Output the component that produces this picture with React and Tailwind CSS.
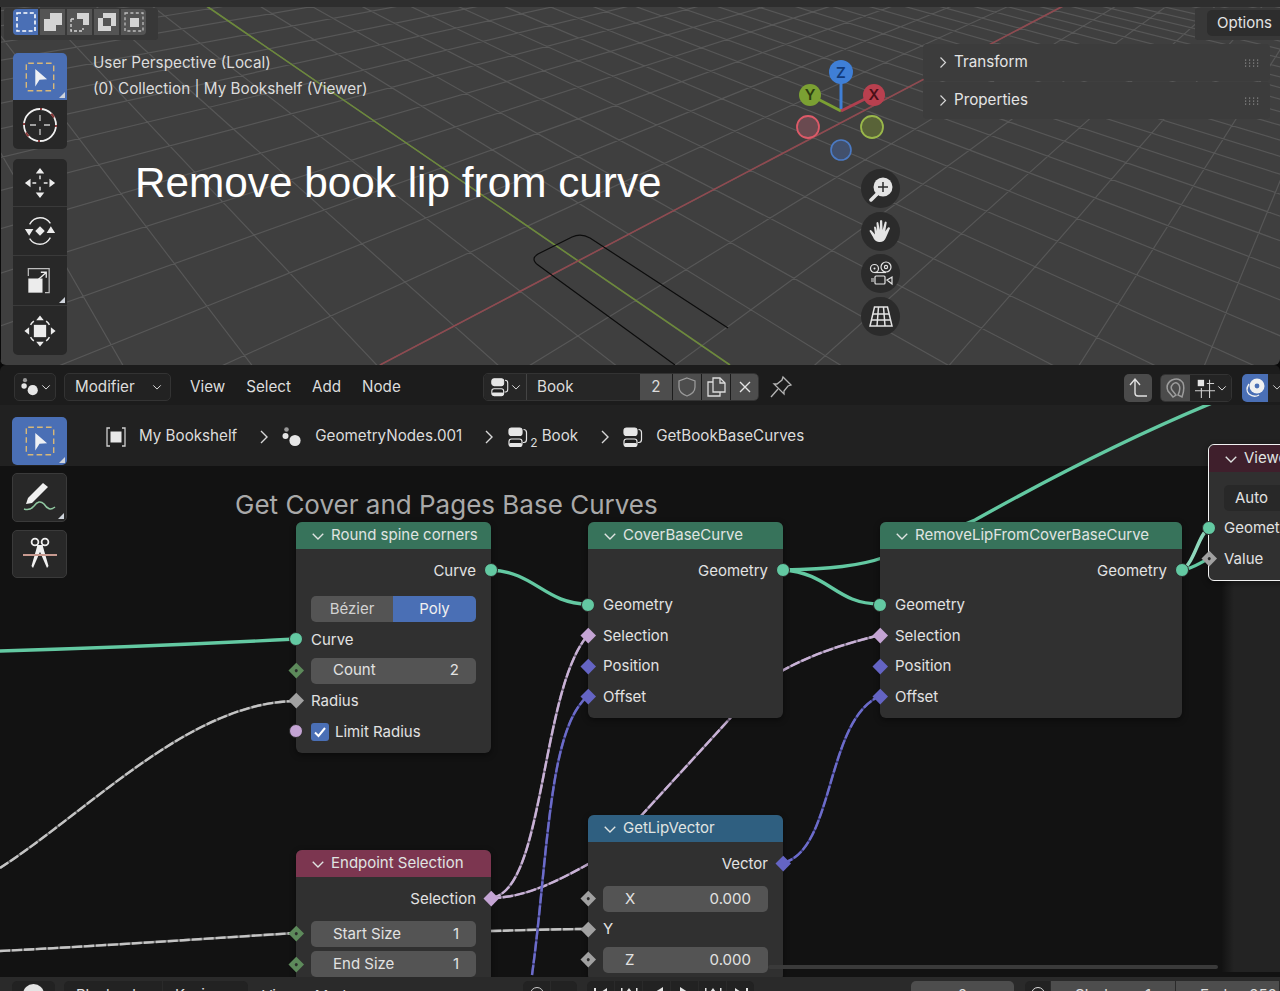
import React from "react";

const VA = [-274, -324];
const VB = [1431, -187];
const S = 108;
function gridLines() {
  const out = [];
  for (let k = -30; k <= 30; k++) {
    const px = 578 + k * S;
    const py = 261 + 0.08 * (px - 578);
    for (const V of [VA, VB]) {
      const t = (400 - V[1]) / (py - V[1]);
      out.push(`M${V[0]} ${V[1]}L${V[0] + t * (px - V[0])} 400`);
    }
  }
  return out.join("");
}

const Chev = ({ cls = "w-[11px] h-[11px]", d = "M1.5 4L6 8.5L10.5 4" }) => (
  <svg viewBox="0 0 12 12" className={cls} fill="none" stroke="currentColor" strokeWidth="1.2">
    <path d={d} />
  </svg>
);
const RightChev = ({ cls = "w-[12px] h-[16px]" }) => (
  <svg viewBox="0 0 12 16" className={cls} fill="none" stroke="#d8d8d8" strokeWidth="1.4">
    <path d="M3 2L9 8L3 14" />
  </svg>
);

const NodesIcon = ({ cls = "w-[22px] h-[22px]" }) => (
  <svg viewBox="0 0 22 22" className={cls} fill="#e6e6e6">
    <circle cx="5.5" cy="3.5" r="2.3" fill="#9a9a9a" />
    <circle cx="4.5" cy="10" r="3" />
    <circle cx="14" cy="14.5" r="5.6" />
  </svg>
);
const GroupIcon = ({ cls = "w-[22px] h-[22px]" }) => (
  <svg viewBox="0 0 22 22" className={cls} fill="none" stroke="#e6e6e6" strokeWidth="1.2">
    <rect x="2" y="2" width="13" height="7.5" rx="2.5" fill="#e6e6e6" />
    <rect x="2" y="13" width="13" height="7.5" rx="2.5" fill="#1f1f1f" />
    <rect x="2" y="17" width="13" height="3.5" rx="1.5" fill="#e6e6e6" stroke="none" />
    <path d="M16.5 3.5q3 0 3 3v7q0 3-2.5 3h-1" />
  </svg>
);

const SelectIcon = () => (
  <svg viewBox="0 0 36 36" className="w-[34px] h-[34px]">
    <rect x="3.5" y="3.5" width="29" height="29" rx="2" fill="none" stroke="#d8b878" strokeWidth="1.5" strokeDasharray="6 3.4" />
    <path d="M13 9.5L25.5 20.5L17.5 21L13 28Z" fill="#eef0f4" />
  </svg>
);
const Corner = () => (
  <svg viewBox="0 0 6 6" className="absolute right-[2px] bottom-[2px] w-[6px] h-[6px]">
    <path d="M6 0V6H0Z" fill="#cfd4dc" />
  </svg>
);
const CursorIcon = () => (
  <svg viewBox="0 0 36 36" className="w-[36px] h-[36px]" fill="none">
    <circle cx="18" cy="18" r="16" stroke="#f0f0f0" strokeWidth="1.8" />
    <path d="M18 2A16 16 0 0 1 20 2.1M2 18A16 16 0 0 1 2.1 16M18 34A16 16 0 0 1 16 33.9M34 18A16 16 0 0 1 33.9 20" stroke="#8a3a3a" strokeWidth="2" />
    <path d="M6.7 29.3A16 16 0 0 1 4 25.5M29.3 6.7A16 16 0 0 1 32 10.5" stroke="#8a3a3a" strokeWidth="2" />
    <path d="M18 8V14M18 22V28M8 18H14M22 18H28" stroke="#c8c8c8" strokeWidth="1.3" />
  </svg>
);
const MoveIcon = () => (
  <svg viewBox="0 0 36 36" className="w-[34px] h-[34px]" fill="#ececec">
    <path d="M18 2L22.5 8H13.5ZM18 34L13.5 28H22.5ZM2 18L8 13.5V22.5ZM34 18L28 22.5V13.5Z" />
    <path d="M18 10V14M18 22V26M10 18H14M22 18H26" stroke="#ececec" strokeWidth="1.5" />
  </svg>
);
const RotateIcon = () => (
  <svg viewBox="0 0 36 36" className="w-[34px] h-[34px]">
    <path d="M18 13L23 18L18 23L13 18Z" fill="#ececec" />
    <path d="M7 11Q11 4 18 4Q25 4 29 10M29 25Q25 32 18 32Q11 32 7 26" fill="none" stroke="#ececec" strokeWidth="1.4" />
    <path d="M2 16H11L6.5 23ZM25 20H34L29.5 13Z" fill="#ececec" />
  </svg>
);
const ScaleIcon = () => (
  <svg viewBox="0 0 36 36" className="w-[30px] h-[30px]">
    <rect x="4" y="15" width="17" height="17" fill="#ececec" />
    <path d="M4 12V3H29V32H24" fill="none" stroke="#bdbdbd" strokeWidth="1.5" />
    <path d="M15 17L25 8M19 7.5H25.5V14" fill="none" stroke="#ececec" strokeWidth="1.6" />
  </svg>
);
const TransformIcon = () => (
  <svg viewBox="0 0 36 36" className="w-[34px] h-[34px]">
    <rect x="11.5" y="11.5" width="13" height="13" fill="#ececec" />
    <path d="M18 1.5L22 6.5H14ZM18 34.5L14 29.5H22ZM1.5 18L6.5 14V22ZM34.5 18L29.5 22V14Z" fill="#ececec" />
    <path d="M8 11.5A12.5 12.5 0 0 1 11.5 7.5M28 11.5A12.5 12.5 0 0 0 24.5 7.5M8 24.5A12.5 12.5 0 0 0 11.5 28.5M28 24.5A12.5 12.5 0 0 1 24.5 28.5" fill="none" stroke="#ececec" strokeWidth="1.5" />
  </svg>
);

const modeBtn = "h-[26px] w-[25px] flex items-center justify-center bg-[#545454]";
const M1 = () => (
  <svg viewBox="0 0 22 22" className="w-[22px] h-[22px]">
    <rect x="2" y="2" width="18" height="18" fill="none" stroke="#fff" strokeWidth="1.6" strokeDasharray="4 2.4" />
  </svg>
);
const M2 = () => (
  <svg viewBox="0 0 22 22" className="w-[22px] h-[22px]">
    <path d="M2 8H8V2H20V14H14V20H2Z" fill="#d4d4d4" />
  </svg>
);
const M3 = () => (
  <svg viewBox="0 0 22 22" className="w-[22px] h-[22px]">
    <path d="M8 2H20V14H14V8H8Z" fill="#d4d4d4" />
    <path d="M2 8H5M2 8V20H14V17" fill="none" stroke="#d4d4d4" strokeWidth="1.4" strokeDasharray="3 2" />
  </svg>
);
const M4 = () => (
  <svg viewBox="0 0 22 22" className="w-[22px] h-[22px]">
    <path fillRule="evenodd" d="M2 7H7V2H20V15H15V20H2ZM7 7V15H15V7Z" fill="#d4d4d4" />
  </svg>
);
const M5 = () => (
  <svg viewBox="0 0 22 22" className="w-[22px] h-[22px]">
    <rect x="7" y="7" width="9" height="9" fill="#d4d4d4" />
    <rect x="2" y="2" width="18" height="18" fill="none" stroke="#bdbdbd" strokeWidth="1.3" strokeDasharray="3 2.4" />
  </svg>
);

const ZoomIcon = () => (
  <svg viewBox="0 0 26 26" className="w-[26px] h-[26px]">
    <circle cx="15" cy="11" r="9.5" fill="#e4e4e4" />
    <path d="M9 18L3 24" stroke="#e4e4e4" strokeWidth="3.5" strokeLinecap="round" />
    <path d="M15 6V16M10 11H20" stroke="#2a2a2a" strokeWidth="1.5" />
  </svg>
);
const HandIcon = () => (
  <svg viewBox="0 0 26 26" className="w-[26px] h-[26px]" fill="#e4e4e4">
    <path d="M6 9Q7 8 8 9.5L9 13L8.5 5Q9 3.5 10.3 4.5L11.8 12L12 2.8Q13 1 14.2 2.8L14.6 12L16.8 4Q18 3 18.7 4.5L17.2 13.5L20 9.5Q21.5 8.8 22 10.2Q20 15 18 19.5Q16 24.5 11 24Q6.5 23.5 5 19Q2 14 1.5 13Q2 11.5 3.5 12.5L7 16.5Z" />
  </svg>
);
const CameraIcon = () => (
  <svg viewBox="0 0 26 26" className="w-[26px] h-[26px]" fill="none" stroke="#e4e4e4" strokeWidth="1.2">
    <circle cx="6.5" cy="7.5" r="4" />
    <circle cx="18" cy="6" r="5" />
    <path d="M6.5 11.5H18" />
    <circle cx="6.5" cy="7.5" r="1" fill="#e4e4e4" stroke="none" />
    <circle cx="18" cy="6" r="1.6" />
    <rect x="7" y="15" width="10" height="8" rx="1" />
    <path d="M3 18H6M3 20H6M19 19L24 16V23Z" />
  </svg>
);
const PlaneIcon = () => (
  <svg viewBox="0 0 26 26" className="w-[26px] h-[26px]" fill="none" stroke="#e4e4e4" strokeWidth="1.5">
    <path d="M6.5 4H19.5L24 23H2Z" />
    <path d="M5 11H21M3.5 17H22.5M10.5 4L9 23M15.5 4L17 23" />
  </svg>
);

const Socket = ({ side, kind }) => {
  const pos = side === "l" ? "-left-[7px]" : "-right-[7px]";
  if (kind === "geo")
    return <span className={`absolute ${pos} top-1/2 -translate-y-1/2 w-[14px] h-[14px] rounded-full bg-[#63c9a2] border border-[#2a2a2a]`} />;
  if (kind === "bool-c")
    return <span className={`absolute ${pos} top-1/2 -translate-y-1/2 w-[14px] h-[14px] rounded-full bg-[#c4a4d4] border border-[#2a2a2a]`} />;
  const col = {
    pink: "bg-[#c4a4d4]",
    blue: "bg-[#6464c4]",
    gray: "bg-[#a1a1a1]",
    grayd: "bg-[#a1a1a1]",
    greend: "bg-[#5d8a5b]",
  }[kind];
  const dot = kind === "grayd" || kind === "greend";
  return (
    <span className={`absolute ${pos} top-1/2 -translate-y-1/2 w-[14px] h-[14px] flex items-center justify-center`}>
      <span className={`w-[10.5px] h-[10.5px] rotate-45 ${col} flex items-center justify-center shrink-0`}>
        {dot && <span className="w-[3px] h-[3px] bg-[#2c2c2c] rounded-full" />}
      </span>
    </span>
  );
};

const Row = ({ children, right, mt = "", socket, side = "l" }) => (
  <div className={`relative h-[30.6px] flex items-center px-[15px] pt-px ${right ? "justify-end" : ""} ${mt}`}>
    {socket && <Socket side={side} kind={socket} />}
    {children}
  </div>
);
const Field = ({ name, value, nameCls = "ml-[7px]" }) => (
  <div className="w-full h-[26px] rounded-[5px] bg-[#545454] flex items-center justify-between pr-[17px]">
    <span className={`pl-[15px] ${nameCls}`}>{name}</span>
    <span>{value}</span>
  </div>
);

const NodeOpen = ({ pos, head, title, children, extra = "" }) => (
  <div className={`absolute ${pos} rounded-[6px] bg-[#303030] shadow-[0_2px_6px_rgba(0,0,0,0.45)] text-[#e2e2e2] text-[15px] ${extra}`}>
    <div className={`h-[27px] rounded-t-[6px] ${head} flex items-center pl-[15px] gap-[6px] text-[#e0e4e2]`}>
      <Chev cls="w-[14px] h-[14px]" />
      <span className="whitespace-nowrap">{title}</span>
    </div>
    <div className="pt-[6px] pb-[6px]">{children}</div>
  </div>
);

const Dash = ({ d, base, top }) => (
  <>
    <path d={d} stroke={base} strokeWidth="2.4" />
    <path d={d} stroke={top} strokeWidth="2.4" strokeDasharray="10 2" />
  </>
);

const Wires = () => (
  <svg viewBox="0 405 1280 572" className="absolute left-0 top-0 w-[1280px] h-[572px]" fill="none">
    <g stroke="#63c9a2" strokeWidth="3.4" strokeLinecap="round">
      <path d="M0 651C100 648 200 644 296 639" />
      <path d="M491 570C535 572 545 604 588 604" />
      <path d="M783 570C830 573 835 604 880 604" />
      <path d="M783 570C830 569 860 566 885 557L975 520C1050 478 1130 437 1212 403" />
      <path d="M1182 570C1195 568 1200 562 1209 559" />
    </g>
    <path d="M1182 570C1195 562 1198 535 1209 528" stroke="#8fd8bc" strokeWidth="3.4" />
    <Dash d="M0 868C90 810 190 702 296 701" base="#6e6e6e" top="#c4c4c4" />
    <Dash d="M0 951C100 946 200 939 296 933" base="#6e6e6e" top="#c4c4c4" />
    <Dash d="M491 931C530 930 560 929 588 929" base="#6e6e6e" top="#c4c4c4" />
    <Dash d="M491 898C545 892 540 690 588 635" base="#7d6f88" top="#c9b2d6" />
    <Dash d="M491 898C525 898 560 880 592 862" base="#7d6f88" top="#c9b2d6" />
    <Dash d="M640 817L735 713" base="#7d6f88" top="#c9b2d6" />
    <Dash d="M780 672C810 655 840 645 880 635" base="#7d6f88" top="#c9b2d6" />
    <Dash d="M532 975C548 860 548 728 588 696" base="#3f3f80" top="#6c6cca" />
    <Dash d="M783 863C835 850 825 720 880 696" base="#3f3f80" top="#6c6cca" />
  </svg>
);

const Sep = () => <div className="h-px bg-[#3a3a3a]" />;
const ToolBtn = ({ children, corner, active, cls = "" }) => (
  <div className={`relative flex items-center justify-center ${active ? "bg-[#4a6fb5]" : "bg-[#282828]"} ${cls}`}>
    {children}
    {corner && <Corner />}
  </div>
);

const Dots = () => (
  <svg viewBox="0 0 16 8" className="w-[16px] h-[8px]" fill="#8a8a8a">
    {[1, 5, 9, 13].map((x) => [1, 4, 7].map((y) => <rect key={`${x}${y}`} x={x} y={y - 0.5} width="1.2" height="1.2" />))}
  </svg>
);

const Panel = ({ title }) => (
  <div className="h-[37px] w-[347px] bg-[#3c3c3c] rounded-[4px] flex items-center pl-[15px] pr-[10px] text-[15.2px] text-[#e4e4e4]">
    <RightChev cls="w-[10px] h-[15px]" />
    <span className="ml-[6px] flex-1">{title}</span>
    <Dots />
  </div>
);

const Viewport = () => (
  <div className="relative h-[365px] bg-[#3f3f3f] overflow-hidden rounded-b-[6px]">
    <svg viewBox="0 0 1280 365" className="absolute left-0 top-0 w-[1280px] h-[365px]" fill="none">
      <path d={gridLines()} stroke="#575757" strokeWidth="1.2" />
      <path d="M205 5L730 365" stroke="#6d8a3b" strokeWidth="1.6" />
      <path d="M1065 5L380 365" stroke="#8f4a50" strokeWidth="1.6" />
      <path d="M675 365L538 265Q530 259 538 254L572 237Q581 233 590 238L728 328" stroke="#0c0c0c" strokeWidth="1.2" />
    </svg>
    <div className="absolute left-0 top-0 w-px h-[365px] bg-[#0a0a0a]" />
    <div className="absolute left-0 top-0 right-0 h-[7px] bg-[#2e2e2e]" />
    <div className="absolute left-[4px] top-[8px] w-[154px] h-[32px] bg-[#383838] rounded-[3px] pl-[9px] pt-px flex">
      <div className="flex gap-[2px] rounded-[4px] overflow-hidden h-[26px]">
        <div className={`${modeBtn} !bg-[#4a6fb5]`}><M1 /></div>
        <div className={modeBtn}><M2 /></div>
        <div className={modeBtn}><M3 /></div>
        <div className={modeBtn}><M4 /></div>
        <div className={modeBtn}><M5 /></div>
      </div>
    </div>
    <div className="absolute right-0 top-[8px] w-[85px] h-[32px] bg-[#383838] rounded-l-[3px] pl-[12px] pt-[2px]">
      <div className="h-[26px] bg-[#2d2d2d] rounded-l-[5px] flex items-center pl-[10px] text-[15px] text-[#e4e4e4]">Options</div>
    </div>
    <div className="absolute left-[13px] top-[53px] w-[54px] flex flex-col gap-[10px]">
      <div className="rounded-[5px] overflow-hidden flex flex-col">
        <ToolBtn active corner cls="h-[47px]"><SelectIcon /></ToolBtn>
        <ToolBtn cls="h-[49px]"><CursorIcon /></ToolBtn>
      </div>
      <div className="rounded-[5px] overflow-hidden flex flex-col">
        <ToolBtn cls="h-[47px]"><MoveIcon /></ToolBtn>
        <Sep />
        <ToolBtn cls="h-[48px]"><RotateIcon /></ToolBtn>
        <Sep />
        <ToolBtn corner cls="h-[49px]"><ScaleIcon /></ToolBtn>
        <Sep />
        <ToolBtn cls="h-[49px]"><TransformIcon /></ToolBtn>
      </div>
    </div>
    <div className="absolute left-[93px] top-[50px] text-[15.25px] leading-[25.5px] text-[#dcdcdc]">
      <div>User Perspective (Local)</div>
      <div>(0) Collection | My Bookshelf (Viewer)</div>
    </div>
    <div className="absolute left-[135px] top-[156px] text-[42.3px] leading-[54px] text-white whitespace-nowrap [font-family:'Liberation_Sans',sans-serif]">
      Remove book lip from curve
    </div>
    <svg viewBox="0 0 100 110" className="absolute left-[790px] top-[55px] w-[100px] h-[110px]">
      <path d="M51 56V20" stroke="#3f7fd6" strokeWidth="3" />
      <path d="M51 56L20 40" stroke="#7ba033" strokeWidth="3" />
      <path d="M51 56L83 40" stroke="#b0404f" strokeWidth="3" />
      <circle cx="51" cy="17" r="12" fill="#3f7fd6" />
      <circle cx="20" cy="40" r="11" fill="#7ba033" />
      <circle cx="84" cy="40" r="11" fill="#b9404f" />
      <circle cx="18" cy="72" r="11" fill="#6a4a50" stroke="#dc5a68" strokeWidth="1.8" />
      <circle cx="82" cy="72" r="11" fill="#596338" stroke="#9ab84a" strokeWidth="1.8" />
      <circle cx="51" cy="95" r="10" fill="#42506c" stroke="#4b7ac4" strokeWidth="1.6" />
      <text x="51" y="22.5" textAnchor="middle" fontSize="15" fontFamily="Inter" fontWeight="600" fill="#123a78">Z</text>
      <text x="20" y="45" textAnchor="middle" fontSize="15" fontFamily="Inter" fontWeight="600" fill="#2c3c10">Y</text>
      <text x="84" y="45" textAnchor="middle" fontSize="15" fontFamily="Inter" fontWeight="600" fill="#4a0f18">X</text>
    </svg>
    <div className="absolute left-[861px] top-[169px] flex flex-col gap-[3.5px]">
      <div className="w-[39px] h-[39px] rounded-full bg-[#2b2b2b] flex items-center justify-center"><ZoomIcon /></div>
      <div className="w-[39px] h-[39px] rounded-full bg-[#2b2b2b] flex items-center justify-center"><HandIcon /></div>
      <div className="w-[39px] h-[39px] rounded-full bg-[#2b2b2b] flex items-center justify-center"><CameraIcon /></div>
      <div className="w-[39px] h-[39px] rounded-full bg-[#2b2b2b] flex items-center justify-center"><PlaneIcon /></div>
    </div>
    <div className="absolute left-[923px] top-[44px] flex flex-col gap-px">
      <Panel title="Transform" />
      <Panel title="Properties" />
    </div>
  </div>
);

const HBtn = ({ children, cls = "" }) => (
  <div className={`h-[28px] flex items-center rounded-[5px] border border-[#333] ${cls}`}>{children}</div>
);

const Header = () => (
  <div className="h-[40px] bg-[#1c1c1c] flex items-center text-[15.2px] text-[#dcdcdc] pl-[14px] pt-[4px] relative rounded-t-[6px]">
    <HBtn cls="w-[42px] justify-center gap-[1px] bg-[#222]">
      <NodesIcon cls="w-[20px] h-[20px]" />
      <Chev cls="w-[10px] h-[10px]" />
    </HBtn>
    <HBtn cls="ml-[8px] w-[107px] pl-[10px] justify-between pr-[8px] bg-[#222]">
      <span>Modifier</span>
      <Chev cls="w-[10px] h-[10px]" />
    </HBtn>
    <span className="ml-[19px]">View</span>
    <span className="ml-[21px]">Select</span>
    <span className="ml-[21px]">Add</span>
    <span className="ml-[21px]">Node</span>
    <div className="absolute left-[483px] top-[8px] h-[28px] flex rounded-[5px] overflow-hidden border border-[#333]">
      <div className="w-[43px] bg-[#262626] flex items-center justify-center gap-[1px] border-r border-[#444]">
        <GroupIcon cls="w-[20px] h-[20px]" />
        <Chev cls="w-[10px] h-[10px]" />
      </div>
      <div className="w-[113px] bg-[#262626] flex items-center pl-[10px]">Book</div>
      <div className="w-[32px] bg-[#4d4d4d] flex items-center justify-center mr-px">2</div>
      <div className="w-[28px] bg-[#4d4d4d] flex items-center justify-center mr-px">
        <svg viewBox="0 0 20 22" className="w-[20px] h-[22px]" fill="none" stroke="#9a9a9a" strokeWidth="1.3">
          <path d="M10 2L18 5V11Q18 17 10 20Q2 17 2 11V5Z" />
        </svg>
      </div>
      <div className="w-[28px] bg-[#4d4d4d] flex items-center justify-center mr-px">
        <svg viewBox="0 0 22 22" className="w-[22px] h-[22px]" fill="none" stroke="#dcdcdc" strokeWidth="1.3">
          <path d="M8 16V2H15L20 7V16Z" />
          <path d="M15 2V7H20" />
          <path d="M8 6H3V20H15V16" />
        </svg>
      </div>
      <div className="w-[27px] bg-[#4d4d4d] flex items-center justify-center">
        <svg viewBox="0 0 14 14" className="w-[14px] h-[14px]" stroke="#e4e4e4" strokeWidth="1.4">
          <path d="M2 2L12 12M12 2L2 12" />
        </svg>
      </div>
    </div>
    <svg viewBox="0 0 24 24" className="absolute left-[769px] top-[10px] w-[24px] h-[24px]" fill="none" stroke="#b4b4b4" strokeWidth="1.3">
      <path d="M14 2L22 10L19 11L15 16L15 19L5 9L8 9L13 5Z" />
      <path d="M9 14L2 22" />
    </svg>
    <div className="absolute left-[1124px] top-[9px] w-[28px] h-[28px] bg-[#4b4b4b] rounded-[5px] flex items-center justify-center">
      <svg viewBox="0 0 22 22" className="w-[22px] h-[22px]" fill="none" stroke="#e2e2e2" strokeWidth="1.4">
        <path d="M3 8L8 2L13 8M8 2V16Q8 19 11 19H20" />
      </svg>
    </div>
    <div className="absolute left-[1160px] top-[9px] h-[28px] w-[72px] rounded-[5px] border border-[#333] flex overflow-hidden">
      <div className="w-[29px] bg-[#4b4b4b] flex items-center justify-center">
        <svg viewBox="0 0 22 22" className="w-[22px] h-[22px]" fill="none" stroke="#9c9c9c" strokeWidth="1.5">
          <path d="M8 20L3 14Q0 7 7 3Q14 0 18 6Q20 12 17 20L13 18Q16 12 14 8Q11 4 8 7Q5 10 7 13L11 18Z" />
        </svg>
      </div>
      <div className="flex-1 bg-[#242424] flex items-center justify-center gap-[2px] text-[#ddd]">
        <svg viewBox="0 0 22 22" className="w-[20px] h-[20px]" fill="none" stroke="#cfcfcf" strokeWidth="1.2">
          <rect x="3" y="2" width="7" height="7" fill="#e4e4e4" stroke="none" />
          <path d="M0 14H22M7 11V22M16 2V22M13 6H21" />
        </svg>
        <Chev cls="w-[10px] h-[10px]" />
      </div>
    </div>
    <div className="absolute left-[1242px] top-[9px] h-[28px] w-[60px] rounded-[5px] overflow-hidden flex">
      <div className="w-[26px] bg-[#4a6fb5] flex items-center justify-center">
        <svg viewBox="0 0 22 22" className="w-[22px] h-[22px]" fill="none">
          <circle cx="13" cy="9" r="7.5" fill="#f0f0f0" />
          <circle cx="13" cy="9" r="2.4" fill="#4a6fb5" />
          <path d="M5 7Q1 13 5 17Q10 21 15 18" stroke="#f0f0f0" strokeWidth="1.4" />
        </svg>
      </div>
      <div className="flex-1 bg-[#242424] pl-[4px] pt-[8px] text-[#ccc]"><Chev cls="w-[10px] h-[10px]" /></div>
    </div>
  </div>
);

const AnnotateIcon = () => (
  <svg viewBox="0 0 38 38" className="w-[38px] h-[38px]" fill="none">
    <path d="M22 4L27 8L11 24L5 25L7 19Z" fill="#f0f0f0" />
    <path d="M3 30Q9 32 13 27Q18 20 23 25Q28 33 34 28" stroke="#8fc7a0" strokeWidth="1.5" />
  </svg>
);
const CutIcon = () => (
  <svg viewBox="0 0 38 38" className="w-[38px] h-[38px]" fill="none">
    <circle cx="14" cy="7" r="3.4" stroke="#f0f0f0" strokeWidth="1.8" />
    <circle cx="24" cy="7" r="3.4" stroke="#f0f0f0" strokeWidth="1.8" />
    <path d="M16 10L26 33L27.5 31L21.5 10" fill="#f0f0f0" />
    <path d="M22 10L12 33L10.5 31L16.5 10" fill="#f0f0f0" />
    <path d="M2 20H36" stroke="#c89a90" strokeWidth="1.8" />
  </svg>
);

const tb = "h-[26px] bg-[#4d4d4d] flex items-center justify-center text-[15px] text-[#e0e0e0]";
const Tri = ({ d }) => (
  <svg viewBox="0 0 26 26" className="w-[26px] h-[26px]" fill="#e4e4e4"><path d={d} /></svg>
);

const NodeEditor = () => (
  <div className="relative h-[572px] bg-[#121212] overflow-hidden">
    <div className="absolute left-[1222px] top-[61px] w-[58px] h-[506px] bg-[linear-gradient(90deg,#131313,#232323_12px)]" />
    <div className="relative h-[61px] bg-[#212121] flex items-center pt-[2px] text-[15.2px] text-[#dcdcdc]">
      <svg viewBox="0 0 22 22" className="ml-[105px] w-[22px] h-[22px]" fill="none" stroke="#cfcfcf" strokeWidth="1.3">
        <rect x="5.5" y="5.5" width="11" height="11" fill="#e8e8e8" stroke="none" />
        <path d="M5 2H2V20H5M17 2H20V20H17" />
      </svg>
      <span className="ml-[12px]">My Bookshelf</span>
      <span className="ml-[21px]"><RightChev /></span>
      <span className="ml-[11px]"><NodesIcon /></span>
      <span className="ml-[12px]">GeometryNodes.001</span>
      <span className="ml-[21px]"><RightChev /></span>
      <span className="ml-[12px]"><GroupIcon /></span>
      <span className="relative top-[6px] ml-[1px] text-[12px]">2</span>
      <span className="ml-[4px]">Book</span>
      <span className="ml-[21px]"><RightChev /></span>
      <span className="ml-[11px]"><GroupIcon /></span>
      <span className="ml-[12px]">GetBookBaseCurves</span>
    </div>
    <Wires />
    <div className="absolute left-[12px] top-[12px] w-[55px] flex flex-col gap-[8px]">
      <ToolBtn active corner cls="h-[48px] rounded-[5px]"><SelectIcon /></ToolBtn>
      <ToolBtn corner cls="h-[49px] rounded-[5px] border border-[#3a3a3a]"><AnnotateIcon /></ToolBtn>
      <ToolBtn cls="h-[48px] rounded-[5px] border border-[#3a3a3a]"><CutIcon /></ToolBtn>
    </div>
    <div className="absolute left-[235px] top-[82px] text-[26px] leading-[36px] text-[#a9a9a9] whitespace-nowrap">Get Cover and Pages Base Curves</div>

    <NodeOpen pos="left-[296px] top-[117px] w-[195px]" head="bg-[#37735b]" title="Round spine corners">
      <Row right socket="geo" side="r">Curve</Row>
      <Row mt="mt-[8px]">
        <div className="w-full h-[26px] rounded-[5px] overflow-hidden flex">
          <div className="w-[82px] bg-[#545454] flex items-center justify-center text-[#d2d2d2]">Bézier</div>
          <div className="flex-1 bg-[#4a6fb5] flex items-center justify-center text-[#f0f0f0]">Poly</div>
        </div>
      </Row>
      <Row socket="geo">Curve</Row>
      <Row socket="greend"><Field name="Count" value="2" /></Row>
      <Row socket="gray">Radius</Row>
      <Row socket="bool-c">
        <span className="w-[18px] h-[18px] rounded-[3px] bg-[#4a6fb5] flex items-center justify-center mr-[6px]">
          <svg viewBox="0 0 14 14" className="w-[14px] h-[14px]" fill="none" stroke="#fff" strokeWidth="2"><path d="M2 7.5L5.5 11L12 3" /></svg>
        </span>
        Limit Radius
      </Row>
    </NodeOpen>

    <NodeOpen pos="left-[588px] top-[117px] w-[195px]" head="bg-[#37735b]" title="CoverBaseCurve">
      <Row right socket="geo" side="r">Geometry</Row>
      <Row mt="mt-[4px]" socket="geo">Geometry</Row>
      <Row socket="pink">Selection</Row>
      <Row socket="blue">Position</Row>
      <Row socket="blue">Offset</Row>
    </NodeOpen>

    <NodeOpen pos="left-[880px] top-[117px] w-[302px]" head="bg-[#37735b]" title="RemoveLipFromCoverBaseCurve">
      <Row right socket="geo" side="r">Geometry</Row>
      <Row mt="mt-[4px]" socket="geo">Geometry</Row>
      <Row socket="pink">Selection</Row>
      <Row socket="blue">Position</Row>
      <Row socket="blue">Offset</Row>
    </NodeOpen>

    <NodeOpen pos="left-[1208px] top-[39px] w-[140px] border-[1.5px] border-[#f2f2f2]" head="bg-[#3f1f2c]" title="Viewer">
      <Row mt="mt-[4px]">
        <div className="w-full h-[26px] bg-[#282828] rounded-[5px] flex items-center pl-[11px]">Auto</div>
      </Row>
      <Row socket="geo">Geometry</Row>
      <Row socket="grayd">Value</Row>
    </NodeOpen>

    <NodeOpen pos="left-[296px] top-[445px] w-[195px]" head="bg-[#7c3650]" title="Endpoint Selection">
      <Row right socket="pink" side="r">Selection</Row>
      <Row mt="mt-[4.5px]" socket="greend"><Field name="Start Size" value="1" /></Row>
      <Row socket="greend"><Field name="End Size" value="1" /></Row>
    </NodeOpen>

    <NodeOpen pos="left-[588px] top-[410px] w-[195px]" head="bg-[#2f5f80]" title="GetLipVector">
      <Row right socket="blue" side="r">Vector</Row>
      <Row mt="mt-[4.5px]" socket="grayd"><Field name="X" value="0.000" /></Row>
      <Row socket="gray">Y</Row>
      <Row socket="grayd"><Field name="Z" value="0.000" /></Row>
    </NodeOpen>

    <div className="absolute left-[768px] top-[560px] w-[450px] h-[4px] rounded-full bg-[#3a3a3a]" />
  </div>
);

const Timeline = () => (
  <div className="h-[14px] bg-[#2a2a2a] overflow-hidden flex items-start pt-[4px] pl-[12px] relative">
    <div className={`${tb} w-[43px] !bg-[#222222] rounded-t-[5px]`}>
      <span className="w-[21px] h-[21px] rounded-full bg-[#e4e4e4]" />
    </div>
    <div className="ml-[9px] flex gap-px rounded-t-[5px] overflow-hidden">
      <div className={`${tb} w-[98px] !bg-[#222222] !justify-start pl-[12px] pt-[3px]`}>Playback</div>
      <div className={`${tb} w-[85px] !bg-[#222222] !justify-start pl-[12px] pt-[3px]`}>Keying</div>
    </div>
    <div className="ml-[14px] mt-[4px] text-[15px] text-[#e0e0e0]">View</div>
    <div className="ml-[18px] mt-[4px] text-[15px] text-[#e0e0e0]">Marker</div>
    <div className="absolute left-[523px] top-[4px] flex gap-px">
      <div className={`${tb} w-[27px] !bg-[#222222] rounded-tl-[5px]`}>
        <span className="w-[14px] h-[14px] rounded-full border border-[#ccc]" />
      </div>
      <div className={`${tb} w-[26px] !bg-[#222222] rounded-tr-[5px]`} />
    </div>
    <div className="absolute left-[587px] top-[4px] flex gap-px rounded-t-[5px] overflow-hidden">
      <div className={`${tb} w-[27px] !bg-[#222222]`}><Tri d="M6 7H8V19H6ZM19 7V19L10 13Z" /></div>
      <div className={`${tb} w-[27px] !bg-[#222222]`}><Tri d="M13 7L18 14H8ZM5 7H6.5V19H5ZM20 7H21.5V19H20Z" /></div>
      <div className={`${tb} w-[27px] !bg-[#222222]`}><Tri d="M19 6V20L8 13Z" /></div>
      <div className={`${tb} w-[27px] !bg-[#222222]`}><Tri d="M8 6V20L19 13Z" /></div>
      <div className={`${tb} w-[27px] !bg-[#222222]`}><Tri d="M13 7L18 14H8ZM5 7H6.5V19H5ZM20 7H21.5V19H20Z" /></div>
      <div className={`${tb} w-[27px] !bg-[#222222]`}><Tri d="M18 7H20V19H18ZM7 7V19L16 13Z" /></div>
    </div>
    <div className={`absolute left-[911px] top-[4px] ${tb} w-[103px] rounded-t-[5px] pt-[3px]`}>0</div>
    <div className="absolute left-[1025px] top-[4px] flex gap-px">
      <div className={`${tb} w-[25px] !bg-[#222222] rounded-tl-[5px]`}>
        <span className="w-[14px] h-[14px] rounded-full border border-[#ddd]" />
      </div>
      <div className={`${tb} w-[124px] !justify-between px-[24px] pt-[3px]`}><span>Start</span><span>1</span></div>
      <div className={`${tb} w-[103px] !justify-between pl-[24px] pr-[2px] pt-[3px]`}><span>End</span><span>250</span></div>
    </div>
  </div>
);

export default function App() {
  return (
    <div className="w-[1280px] h-[991px] overflow-hidden bg-[#0a0a0a] [font-family:Inter,sans-serif]">
      <Viewport />
      <Header />
      <NodeEditor />
      <Timeline />
    </div>
  );
}
